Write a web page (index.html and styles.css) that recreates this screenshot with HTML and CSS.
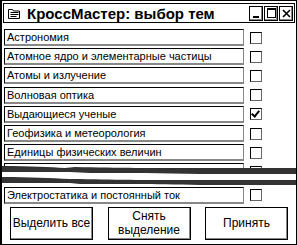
FILE: index.html
```html
<!DOCTYPE html>
<html lang="ru">

<head>
  <meta charset="UTF-8">
  <title>КроссМастер: выбор тем</title>
  <link rel="stylesheet" href="styles.css">
</head>

<body>
  <div class="window">
    <div class="titlebar">
      <svg class="app-icon" width="13" height="11" viewBox="0 0 13 11">
        <path d="M0.5 1.5h4l1 1.5h6v7.5h-11z" fill="#fff" stroke="#000"/>
        <path d="M2.5 4.5h8M2.5 6.5h8M2.5 8.5h6" stroke="#000"/>
      </svg>
      <span class="title">КроссМастер: выбор тем</span>
      <div class="caption-buttons">
        <span class="cap-btn"><i class="min"></i></span>
        <span class="cap-btn"><i class="max"></i></span>
        <span class="cap-btn">
          <svg width="9" height="9" viewBox="0 0 9 9"><path d="M1 1l7 7M8 1l-7 7" stroke="#000" stroke-width="1.6"/></svg>
        </span>
      </div>
    </div>

    <div class="topics">
      <div class="row"><div class="field">Астрономия</div><span class="check"></span></div>
      <div class="row"><div class="field">Атомное ядро и элементарные частицы</div><span class="check"></span></div>
      <div class="row"><div class="field">Атомы и излучение</div><span class="check"></span></div>
      <div class="row"><div class="field">Волновая оптика</div><span class="check"></span></div>
      <div class="row"><div class="field">Выдающиеся ученые</div><span class="check checked"></span></div>
      <div class="row"><div class="field">Геофизика и метеорология</div><span class="check"></span></div>
      <div class="row"><div class="field">Единицы физических величин</div><span class="check"></span></div>
      <div class="row"><div class="field"></div><span class="check"></span></div>
      <div class="row after-cut"><div class="field">Электростатика и постоянный ток</div><span class="check"></span></div>

      <!-- torn-paper break over the hidden part of the list -->
      <svg class="tear" width="297" height="22" viewBox="0 0 297 22" preserveAspectRatio="none">
        <rect x="0" y="4" width="297" height="18" fill="#fff"/>
        <path d="M0 2 C30 2 50 3 65 4 L75 3 C120 4 150 4 200 4 L297 4 L297 10 L200 10 C160 9 130 9 90 9 L70 8 C40 8 20 8 0 8z" fill="#333"/>
        <path d="M0 13 C30 13 50 14 70 15 L80 15 C120 16 150 16 200 16 L297 16 L297 21 L200 21 C150 20 120 20 80 20 L70 19 C40 19 20 19 0 19z" fill="#333"/>
      </svg>
    </div>

    <div class="actions">
      <button class="btn">Выделить все</button>
      <button class="btn">Снять<br>выделение</button>
      <button class="btn">Принять</button>
    </div>
  </div>
</body>

</html>
```

FILE: styles.css
```css
body {
  margin: 0;
  background: #fff;
  font-family: "Liberation Sans", Arial, sans-serif;
  color: #000;
}

.window {
  width: 297px;
  height: 245px;
  box-sizing: border-box;
  border: 1px solid #000;
  border-left-width: 2px;
  position: relative;
  overflow: hidden;
}

.titlebar {
  display: flex;
  align-items: center;
  height: 20px;
  margin: 2px 1px 0 1px;
  border: 1px solid #000;
  box-sizing: border-box;
}

.app-icon {
  margin: 0 6px 0 4px;
}

.title {
  font-weight: bold;
  font-size: 15px;
  flex: 1;
}

.caption-buttons {
  display: flex;
  gap: 1px;
  margin-right: 1px;
}

.cap-btn {
  width: 12px;
  height: 13px;
  border: 1px solid #000;
  box-shadow: inset -1px -1px #888;
  display: flex;
  align-items: center;
  justify-content: center;
  position: relative;
}

.cap-btn .min {
  width: 6px;
  height: 2px;
  background: #000;
  position: absolute;
  left: 3px;
  bottom: 2px;
}

.cap-btn .max {
  width: 7px;
  height: 7px;
  border: 1px solid #000;
  border-top-width: 2px;
}

.topics {
  position: relative;
  padding: 5px 0 0 2px;
}

.row {
  display: flex;
  align-items: center;
  height: 19.2px;
}

.row.after-cut {
  margin-top: 4px;
}

.field {
  width: 240px;
  height: 17px;
  box-sizing: border-box;
  border-left: 1px solid #000;
  border-top: 1px solid #000;
  border-right: 1px solid #888;
  border-bottom: 2px solid #888;
  font-size: 11px;
  line-height: 14px;
  padding-left: 2px;
  white-space: nowrap;
  overflow: hidden;
}

.check {
  width: 12px;
  height: 12px;
  box-sizing: border-box;
  border: 1px solid #000;
  border-right-color: #666;
  border-bottom-color: #666;
  margin-left: 6px;
  position: relative;
}

.check.checked::after {
  content: "";
  position: absolute;
  left: 2px;
  top: 0;
  width: 3px;
  height: 6px;
  border-right: 2px solid #000;
  border-bottom: 2px solid #000;
  transform: rotate(40deg);
}

.tear {
  position: absolute;
  left: -2px;
  top: 141px;
}

.actions {
  display: flex;
  justify-content: space-between;
  padding: 0 8px 0 8px;
  margin-top: 2px;
}

.btn {
  width: 83px;
  height: 33px;
  border: 1px solid #000;
  box-shadow: inset -1px -1px #888;
  background: #fff;
  font-family: "Liberation Sans", Arial, sans-serif;
  font-size: 12px;
  line-height: 14px;
  padding: 0;
  color: #000;
}
```
